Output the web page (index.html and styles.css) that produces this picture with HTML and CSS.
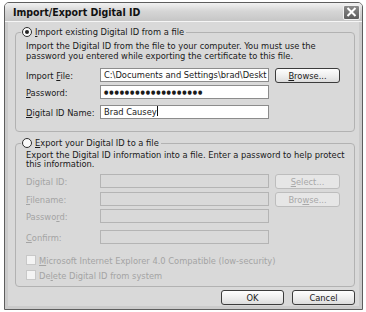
FILE: index.html
```html
<!DOCTYPE html>
<html lang="en">
  <head>
    <meta charset="UTF-8" />
    <title>Import/Export Digital ID</title>
    <link rel="stylesheet" href="styles.css">
  </head>
  <body>
    <div class="window">
      <div class="titlebar">
        <span class="title">Import/Export Digital ID</span>
        <span class="close">
          <svg width="11" height="10" viewBox="0 0 11 10">
            <path d="M1.5 1 L9.5 9 M9.5 1 L1.5 9" stroke="#fff" stroke-width="2" />
          </svg>
        </span>
      </div>
      <div class="body">
        <fieldset class="group">
          <legend><span class="radio checked"></span><u>I</u>mport existing Digital ID from a file</legend>
          <div class="group-inner">
            <p class="desc">Import the Digital ID from the file to your computer. You must use the password you entered while exporting the certificate to this file.</p>
            <div class="row">
              <label>Import <u>F</u>ile:</label>
              <div class="field">C:\Documents and Settings\brad\Deskt</div>
              <button class="btn"><u>B</u>rowse...</button>
            </div>
            <div class="row r-pass">
              <label><u>P</u>assword:</label>
              <div class="field dots">&#9679;&#9679;&#9679;&#9679;&#9679;&#9679;&#9679;&#9679;&#9679;&#9679;&#9679;&#9679;&#9679;&#9679;&#9679;&#9679;&#9679;&#9679;&#9679;</div>
            </div>
            <div class="row">
              <label><u>D</u>igital ID Name:</label>
              <div class="field">Brad Causey<span class="caret"></span></div>
            </div>
          </div>
        </fieldset>

        <fieldset class="group off">
          <legend><span class="radio"></span><u>E</u>xport your Digital ID to a file</legend>
          <div class="group-inner">
            <p class="desc on">Export the Digital ID information into a file. Enter a password to help protect this information.</p>
            <div class="row">
              <label>Digital ID:</label>
              <div class="field"></div>
              <button class="btn" disabled><u>S</u>elect...</button>
            </div>
            <div class="row r-file">
              <label><u>F</u>ilename:</label>
              <div class="field"></div>
              <button class="btn" disabled>Bro<u>w</u>se...</button>
            </div>
            <div class="row r-pw2">
              <label>Passwo<u>r</u>d:</label>
              <div class="field"></div>
            </div>
            <div class="row">
              <label><u>C</u>onfirm:</label>
              <div class="field"></div>
            </div>
            <div class="check first"><span class="box"></span><u>M</u>icrosoft Internet Explorer 4.0 Compatible (low-security)</div>
            <div class="check"><span class="box"></span>De<u>l</u>ete Digital ID from system</div>
          </div>
        </fieldset>

        <div class="footer">
          <button class="btn wide">OK</button>
          <button class="btn wide">Cancel</button>
        </div>
      </div>
    </div>
  </body>
</html>
```

FILE: styles.css
```css
* {
  box-sizing: border-box;
}

body {
  margin: 0;
  background: #fff;
  font-family: "DejaVu Sans Condensed", "DejaVu Sans", sans-serif;
  font-size: 9.25px;
  color: #1a1a1a;
}

.window {
  margin: 2px 0 0 4px;
  width: 359px;
  height: 308px;
  border: 1px solid #5e5e5e;
  border-radius: 5px 5px 0 0;
  background: #d9d9d9;
  display: flex;
  flex-direction: column;
  overflow: hidden;
}

.titlebar {
  height: 19px;
  flex: none;
  display: flex;
  align-items: center;
  justify-content: space-between;
  padding: 0 2px 0 8px;
  background: linear-gradient(#f2f2f2, #d6d6d6 45%, #c6c6c6);
  border-bottom: 1px solid #f6f6f6;

  .title {
    font-weight: bold;
    font-size: 10.5px;
    color: #111;
  }
  .close {
    width: 17px;
    height: 15px;
    border: 1px solid #f0f0f0;
    border-radius: 2px;
    background: linear-gradient(#8a8a8a, #5c5c5c);
    display: flex;
    align-items: center;
    justify-content: center;
  }
}

.body {
  flex: 1;
  display: flex;
  flex-direction: column;
  padding: 4px 4px 0 7px;
  border: 3px solid #cbcbcb;
  border-top: 0;
}

.group {
  margin: 0;
  padding: 0;
  border: 1px solid #b2b2b2;
  border-radius: 4px;
  min-width: 0;

  legend {
    display: flex;
    align-items: center;
    height: 12px;
    line-height: 12px;
    margin-left: 5px;
    padding: 0 2px 0 1px;
  }
  .group-inner {
    padding: 3px 6px 9px 10px;
  }
  .desc {
    line-height: 10px;
    margin: 0 0 7px;
  }
  .row {
    margin-bottom: 3px;
  }
  .r-pass {
    margin-bottom: 6px;
  }

  &.off {
    margin-top: 5px;
    color: #a4a4a4;

    legend,
    .desc.on {
      color: #1a1a1a;
    }
    .group-inner {
      padding: 1px 6px 6px 10px;
    }
    .desc {
      line-height: 9px;
      margin-bottom: 6px;
    }
    .row {
      margin-bottom: 4px;
    }
    .r-file {
      margin-bottom: 3px;
    }
    .r-pw2 {
      margin-bottom: 7px;
    }
    .field {
      background: #d9d9d9;
      border-color: #b4b4b4;
    }
  }
}

.radio {
  width: 10px;
  height: 10px;
  border: 1px solid #2c2c2c;
  border-radius: 50%;
  background: #fafafa;
  margin-right: 3px;
  display: flex;
  align-items: center;
  justify-content: center;

  &.checked::after {
    content: "";
    width: 4px;
    height: 4px;
    border-radius: 50%;
    background: #222;
  }
}

.row {
  display: flex;
  align-items: center;
  height: 14px;

  label {
    width: 74px;
    flex: none;
  }
}

.field {
  width: 169px;
  height: 14px;
  flex: none;
  border: 1px solid #8c8c8c;
  background: #fff;
  padding: 0 3px;
  line-height: 12px;
  white-space: nowrap;
  overflow: hidden;

  &.dots {
    font-size: 5.5px;
    letter-spacing: 0.9px;
  }
}

.caret {
  display: inline-block;
  width: 1px;
  height: 10px;
  background: #111;
  vertical-align: -1px;
}

.btn {
  font: inherit;
  color: #1a1a1a;
  width: 65px;
  height: 15px;
  margin-left: 6px;
  padding: 0;
  border: 1px solid #3c3c3c;
  border-radius: 3px;
  background: linear-gradient(#fefefe, #ececec 60%, #dcdcdc);

  &:disabled {
    color: #a8a8a8;
    border-color: #bdbdbd;
    background: #e6e6e6;
  }
  &.wide {
    width: 63px;
    height: 15px;
    margin-left: 8px;
  }
}

.check {
  display: flex;
  align-items: center;
  height: 10px;
  margin-bottom: 5px;

  &.first {
    margin-top: 11px;
  }
  &:last-child {
    margin-bottom: 0;
  }
  .box {
    width: 10px;
    height: 10px;
    background: #f4f4f4;
    border: 1px solid #c8c8c8;
    margin-right: 3px;
  }
}

.footer {
  display: flex;
  justify-content: flex-end;
  padding: 3px 0 0 0;
}
```
